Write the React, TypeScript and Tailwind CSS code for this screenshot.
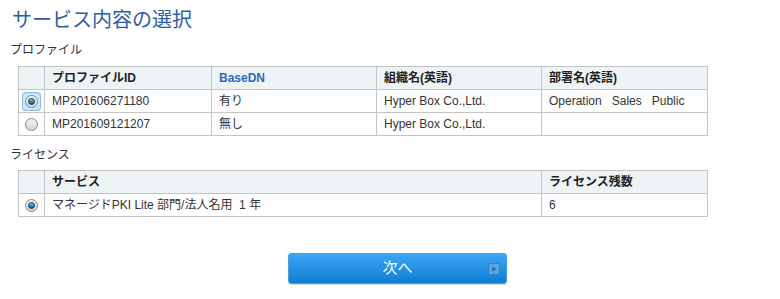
import React from 'react';

const Radio: React.FC<{ checked?: boolean; focused?: boolean }> = ({ checked, focused }) => (
  <span
    className={`inline-flex items-center justify-center w-[17px] h-[17px] rounded-[3px] ${
      focused ? 'bg-[#cfe3fb] ring-1 ring-[#8fb8ea]' : ''
    }`}
  >
    <span className="flex items-center justify-center w-[13px] h-[13px] rounded-full border border-[#8a8a8a] bg-gradient-to-b from-[#f4f4f4] to-[#d6d6d6]">
      {checked && (
        <span className="w-[7px] h-[7px] rounded-full bg-gradient-to-b from-[#7ec3ef] to-[#12538f] border border-[#0e3d6b]" />
      )}
    </span>
  </span>
);

const th = 'border border-[#c4c4c4] bg-[#eef3f6] h-[23px] px-[7px] text-left font-bold text-[#222]';
const td = 'border border-[#c4c4c4] h-[23px] px-[7px] text-[#333]';

const App: React.FC = () => {
  const profiles = [
    { id: 'MP201606271180', dn: '有り', org: 'Hyper Box Co.,Ltd.', dept: 'Operation\u00a0\u00a0\u00a0Sales\u00a0\u00a0\u00a0Public', checked: true },
    { id: 'MP201609121207', dn: '無し', org: 'Hyper Box Co.,Ltd.', dept: '', checked: false },
  ];

  return (
    <div
      className="w-[780px] h-[299px] bg-white px-[10px] pt-[6px] text-[12px] text-[#333]"
      style={{ fontFamily: '"Liberation Sans", "Noto Sans CJK JP", sans-serif' }}
    >
      <h1 className="text-[20px] leading-[28px] text-[#2b5ea8] pl-[2px]">サービス内容の選択</h1>

      <div className="mt-[8px] leading-[16px]">プロファイル</div>
      <table className="ml-[8px] mt-[8px] w-[690px] border-collapse text-[12px]">
        <colgroup>
          <col className="w-[26px]" />
          <col className="w-[167px]" />
          <col className="w-[165px]" />
          <col className="w-[165px]" />
          <col />
        </colgroup>
        <thead>
          <tr>
            <th className={th}></th>
            <th className={th}>プロファイルID</th>
            <th className={`${th} !text-[#2b6bbf]`}>BaseDN</th>
            <th className={th}>組織名(英語)</th>
            <th className={th}>部署名(英語)</th>
          </tr>
        </thead>
        <tbody>
          {profiles.map((p) => (
            <tr key={p.id}>
              <td className="border border-[#c4c4c4] h-[23px] text-center">
                <div className="flex justify-center">
                  <Radio checked={p.checked} focused={p.checked} />
                </div>
              </td>
              <td className={td}>{p.id}</td>
              <td className={td}>{p.dn}</td>
              <td className={td}>{p.org}</td>
              <td className={td}>{p.dept}</td>
            </tr>
          ))}
        </tbody>
      </table>

      <div className="mt-[11px] leading-[16px]">ライセンス</div>
      <table className="ml-[8px] mt-[7px] w-[690px] border-collapse text-[12px]">
        <colgroup>
          <col className="w-[26px]" />
          <col className="w-[497px]" />
          <col />
        </colgroup>
        <thead>
          <tr>
            <th className={th}></th>
            <th className={th}>サービス</th>
            <th className={th}>ライセンス残数</th>
          </tr>
        </thead>
        <tbody>
          <tr>
            <td className="border border-[#c4c4c4] h-[23px] text-center">
              <div className="flex justify-center">
                <Radio checked />
              </div>
            </td>
            <td className={td}>マネージドPKI Lite 部門/法人名用&nbsp;&nbsp;1 年</td>
            <td className={td}>6</td>
          </tr>
        </tbody>
      </table>

      <div className="mt-[36px] pl-[278px]">
        <button className="relative flex items-center justify-center w-[219px] h-[31px] rounded-[3px] border border-[#4a9de0] bg-gradient-to-b from-[#3ba6f6] to-[#0a7ed2] text-white text-[15px] shadow-[0_1px_1px_rgba(0,0,0,0.15)]">
          次へ
          <span className="absolute right-[6px] top-[9px] flex items-center justify-center w-[12px] h-[12px] rounded-[2px] bg-[#5aa6e4] border border-[#2c7fc4]">
            <svg width="6" height="6" viewBox="0 0 6 6">
              <path d="M1.5 0.5 L5 3 L1.5 5.5 Z" fill="#1a5f9e" />
            </svg>
          </span>
        </button>
      </div>
    </div>
  );
};

export default App;
